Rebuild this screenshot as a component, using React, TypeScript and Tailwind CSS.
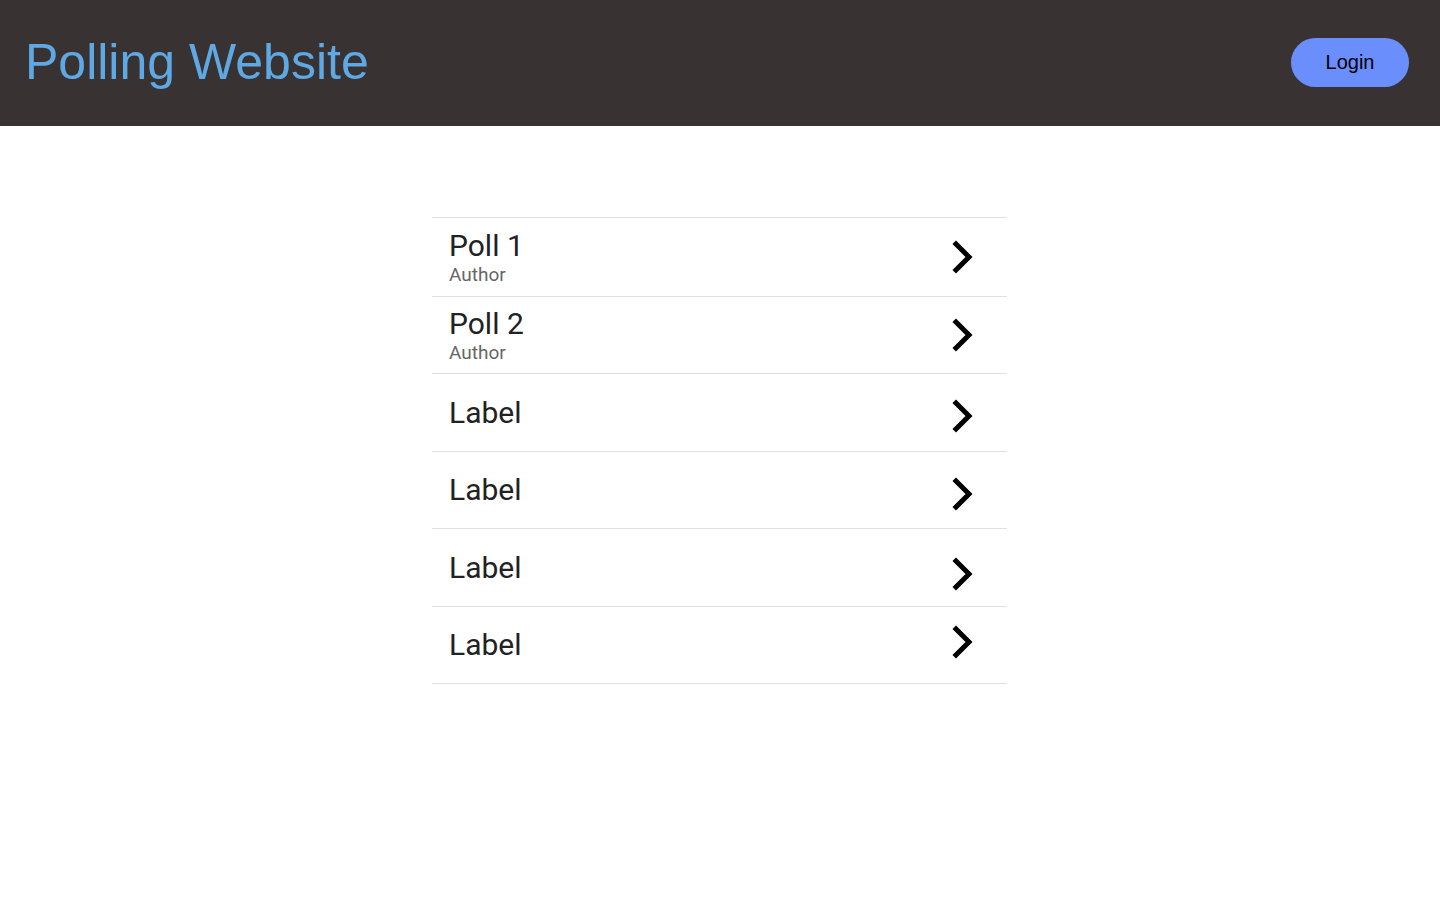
import React from "react";

const rows = [
  { title: "Poll 1", author: "Author", off: "translate-y-0", h: "h-[79px]" },
  { title: "Poll 2", author: "Author", off: "translate-y-0", h: "h-[77px]" },
  { title: "Label", off: "translate-y-[3px]", h: "h-[78px]" },
  { title: "Label", off: "translate-y-[4px]", h: "h-[77px]" },
  { title: "Label", off: "translate-y-[6px]", h: "h-[78px]" },
  { title: "Label", off: "-translate-y-[3px]", h: "h-[77px]" },
];

function Chevron({ className }: { className?: string }) {
  return (
    <svg width="24" height="34" viewBox="0 0 24 34" className={className}>
      <polyline
        points="5,4 18,17 5,30"
        fill="none"
        stroke="#000"
        strokeWidth="5"
        strokeLinecap="square"
        strokeLinejoin="miter"
      />
    </svg>
  );
}

export default function App() {
  return (
    <div className="min-h-screen bg-white">
      <header className="h-[126px] bg-[#383232] flex items-center justify-between pl-[25px] pr-[31px]">
        <h1
          className="text-[50px] leading-none text-[#5ea8e4] -translate-y-[1px]"
          style={{ fontFamily: '"Liberation Sans", Arial, sans-serif' }}
        >
          Polling Website
        </h1>
        <button
          className="w-[118px] h-[49px] rounded-full bg-[#6b8efd] text-black text-[20px] flex items-center justify-center -translate-y-[1px]"
          style={{ fontFamily: '"Liberation Sans", Arial, sans-serif' }}
        >
          Login
        </button>
      </header>
      <main className="flex justify-center pt-[91px]">
        <ul
          className="w-[575px] border-t border-[#e0e0e0] ml-[-1px]"
          style={{ fontFamily: 'Roboto, "Noto Sans", sans-serif' }}
        >
          {rows.map((r, i) => (
            <li
              key={i}
              className={`${r.h} border-b border-[#e0e0e0] flex items-center justify-between pl-[17px] pr-[32px]`}
            >
              {r.author ? (
                <div className="flex flex-col translate-y-[1px]">
                  <span className="text-[30px] leading-[32px] text-[#222222]">{r.title}</span>
                  <span className="text-[19px] leading-[22px] mt-[2px] text-[#666666]">{r.author}</span>
                </div>
              ) : (
                <span className="text-[30px] leading-[34px] text-[#222222]">{r.title}</span>
              )}
              <Chevron className={r.off} />
            </li>
          ))}
        </ul>
      </main>
    </div>
  );
}
